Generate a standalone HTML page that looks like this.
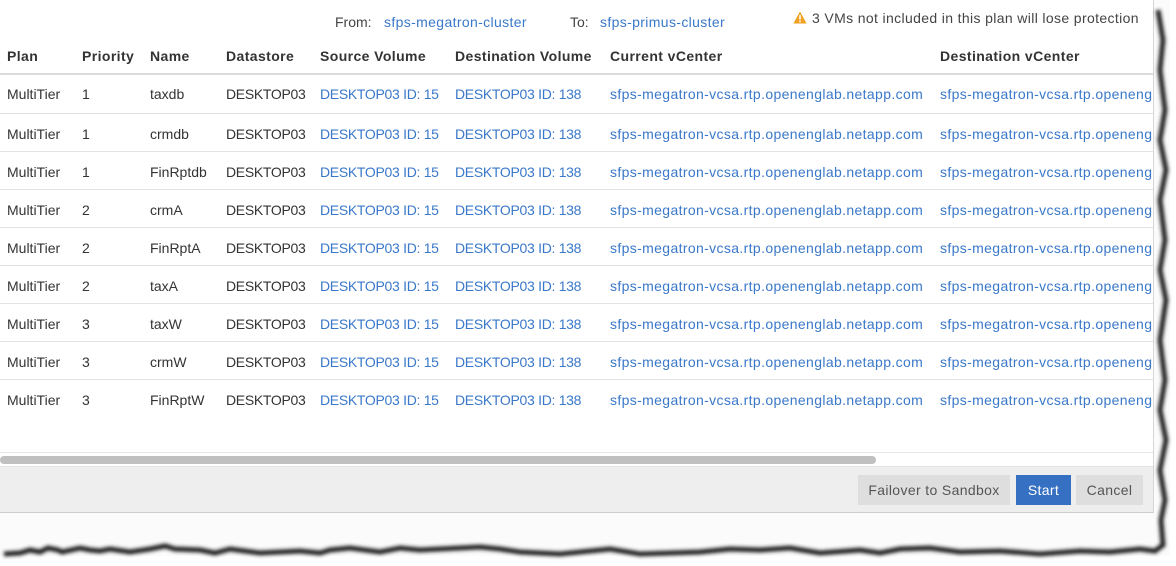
<!DOCTYPE html>
<html><head><meta charset="utf-8">
<style>
*{margin:0;padding:0;box-sizing:border-box}
body{width:1176px;height:566px;overflow:hidden;background:#fff;font-family:"Liberation Sans",sans-serif;font-size:14px;color:#333;position:relative}
#panel{position:absolute;left:0;top:0;width:1154px;height:513px;background:#fff;border-right:1px solid #d6d6d6;overflow:hidden}
.t{position:absolute;white-space:nowrap;line-height:18px}
.b{font-weight:bold;color:#333;letter-spacing:0.4px}
.l{color:#3a78c9}
.s{letter-spacing:-0.3px}
.v{letter-spacing:0.36px}
.row{position:absolute;left:0;width:1153px;height:38px;border-top:1px solid #e3e3e3}
.row .t{top:11px}
.btn{position:absolute;top:475px;height:30px;line-height:30px;text-align:center;font-size:14px;color:#555;background:#dedede}
</style></head><body>
<div style="position:absolute;left:0;top:0;width:1170px;height:556px;background:#fbfbfb"></div>
<div id="panel">
  <div class="t" style="left:335px;top:13px;color:#444">From:</div>
  <div class="t l v" style="left:384px;top:13px">sfps-megatron-cluster</div>
  <div class="t" style="left:570px;top:13px;color:#444">To:</div>
  <div class="t l v" style="left:600px;top:13px">sfps-primus-cluster</div>
  <svg style="position:absolute;left:793px;top:11px" width="14" height="13" viewBox="0 0 14 13"><path d="M7 0.5L13.6 12.5H0.4Z" fill="#f0a020"/><rect x="6.2" y="4" width="1.6" height="4.6" fill="#fff"/><rect x="6.2" y="9.6" width="1.6" height="1.6" fill="#fff"/></svg>
  <div class="t v" style="left:812px;top:9px;color:#444">3 VMs not included in this plan will lose protection</div>

  <div class="t b" style="left:7px;top:47px">Plan</div>
  <div class="t b" style="left:82px;top:47px">Priority</div>
  <div class="t b" style="left:150px;top:47px">Name</div>
  <div class="t b" style="left:226px;top:47px">Datastore</div>
  <div class="t b" style="left:320px;top:47px">Source Volume</div>
  <div class="t b" style="left:455px;top:47px">Destination Volume</div>
  <div class="t b" style="left:610px;top:47px">Current vCenter</div>
  <div class="t b" style="left:940px;top:47px">Destination vCenter</div>
  <div style="position:absolute;left:0;top:73px;width:1153px;height:2px;background:#dcdcdc"></div>

  <div class="row" style="top:74px;border-top:none"><div class="t" style="left:7px">MultiTier</div><div class="t" style="left:82px">1</div><div class="t" style="left:150px">taxdb</div><div class="t s" style="left:226px">DESKTOP03</div><div class="t l s" style="left:320px">DESKTOP03 ID: 15</div><div class="t l s" style="left:455px">DESKTOP03 ID: 138</div><div class="t l v" style="left:610px">sfps-megatron-vcsa.rtp.openenglab.netapp.com</div><div class="t l v" style="left:940px">sfps-megatron-vcsa.rtp.openenglab.netapp.com</div></div>
  <div class="row" style="top:113px"><div class="t" style="left:7px">MultiTier</div><div class="t" style="left:82px">1</div><div class="t" style="left:150px">crmdb</div><div class="t s" style="left:226px">DESKTOP03</div><div class="t l s" style="left:320px">DESKTOP03 ID: 15</div><div class="t l s" style="left:455px">DESKTOP03 ID: 138</div><div class="t l v" style="left:610px">sfps-megatron-vcsa.rtp.openenglab.netapp.com</div><div class="t l v" style="left:940px">sfps-megatron-vcsa.rtp.openenglab.netapp.com</div></div>
  <div class="row" style="top:151px"><div class="t" style="left:7px">MultiTier</div><div class="t" style="left:82px">1</div><div class="t" style="left:150px">FinRptdb</div><div class="t s" style="left:226px">DESKTOP03</div><div class="t l s" style="left:320px">DESKTOP03 ID: 15</div><div class="t l s" style="left:455px">DESKTOP03 ID: 138</div><div class="t l v" style="left:610px">sfps-megatron-vcsa.rtp.openenglab.netapp.com</div><div class="t l v" style="left:940px">sfps-megatron-vcsa.rtp.openenglab.netapp.com</div></div>
  <div class="row" style="top:189px"><div class="t" style="left:7px">MultiTier</div><div class="t" style="left:82px">2</div><div class="t" style="left:150px">crmA</div><div class="t s" style="left:226px">DESKTOP03</div><div class="t l s" style="left:320px">DESKTOP03 ID: 15</div><div class="t l s" style="left:455px">DESKTOP03 ID: 138</div><div class="t l v" style="left:610px">sfps-megatron-vcsa.rtp.openenglab.netapp.com</div><div class="t l v" style="left:940px">sfps-megatron-vcsa.rtp.openenglab.netapp.com</div></div>
  <div class="row" style="top:227px"><div class="t" style="left:7px">MultiTier</div><div class="t" style="left:82px">2</div><div class="t" style="left:150px">FinRptA</div><div class="t s" style="left:226px">DESKTOP03</div><div class="t l s" style="left:320px">DESKTOP03 ID: 15</div><div class="t l s" style="left:455px">DESKTOP03 ID: 138</div><div class="t l v" style="left:610px">sfps-megatron-vcsa.rtp.openenglab.netapp.com</div><div class="t l v" style="left:940px">sfps-megatron-vcsa.rtp.openenglab.netapp.com</div></div>
  <div class="row" style="top:265px"><div class="t" style="left:7px">MultiTier</div><div class="t" style="left:82px">2</div><div class="t" style="left:150px">taxA</div><div class="t s" style="left:226px">DESKTOP03</div><div class="t l s" style="left:320px">DESKTOP03 ID: 15</div><div class="t l s" style="left:455px">DESKTOP03 ID: 138</div><div class="t l v" style="left:610px">sfps-megatron-vcsa.rtp.openenglab.netapp.com</div><div class="t l v" style="left:940px">sfps-megatron-vcsa.rtp.openenglab.netapp.com</div></div>
  <div class="row" style="top:303px"><div class="t" style="left:7px">MultiTier</div><div class="t" style="left:82px">3</div><div class="t" style="left:150px">taxW</div><div class="t s" style="left:226px">DESKTOP03</div><div class="t l s" style="left:320px">DESKTOP03 ID: 15</div><div class="t l s" style="left:455px">DESKTOP03 ID: 138</div><div class="t l v" style="left:610px">sfps-megatron-vcsa.rtp.openenglab.netapp.com</div><div class="t l v" style="left:940px">sfps-megatron-vcsa.rtp.openenglab.netapp.com</div></div>
  <div class="row" style="top:341px"><div class="t" style="left:7px">MultiTier</div><div class="t" style="left:82px">3</div><div class="t" style="left:150px">crmW</div><div class="t s" style="left:226px">DESKTOP03</div><div class="t l s" style="left:320px">DESKTOP03 ID: 15</div><div class="t l s" style="left:455px">DESKTOP03 ID: 138</div><div class="t l v" style="left:610px">sfps-megatron-vcsa.rtp.openenglab.netapp.com</div><div class="t l v" style="left:940px">sfps-megatron-vcsa.rtp.openenglab.netapp.com</div></div>
  <div class="row" style="top:379px"><div class="t" style="left:7px">MultiTier</div><div class="t" style="left:82px">3</div><div class="t" style="left:150px">FinRptW</div><div class="t s" style="left:226px">DESKTOP03</div><div class="t l s" style="left:320px">DESKTOP03 ID: 15</div><div class="t l s" style="left:455px">DESKTOP03 ID: 138</div><div class="t l v" style="left:610px">sfps-megatron-vcsa.rtp.openenglab.netapp.com</div><div class="t l v" style="left:940px">sfps-megatron-vcsa.rtp.openenglab.netapp.com</div></div>

  <div style="position:absolute;left:0;top:452px;width:1153px;height:1px;background:#e6e6e6"></div>
  <div style="position:absolute;left:0;top:456px;width:876px;height:8px;border-radius:4px;background:#c0c0c0"></div>
  <div style="position:absolute;left:0;top:466px;width:1153px;height:47px;background:#eeeeee;border-top:1px solid #e2e2e2;border-bottom:1px solid #cccccc"></div>
  <div class="btn v" style="left:858px;width:152px">Failover to Sandbox</div>
  <div class="btn v" style="left:1016px;width:55px;background:#3670c2;color:#fff">Start</div>
  <div class="btn v" style="left:1076px;width:67px">Cancel</div>
</div>
<svg style="position:absolute;left:0;top:0" width="1176" height="566">
<defs><filter id="f" x="-5%" y="-50%" width="110%" height="200%"><feGaussianBlur stdDeviation="1.8"/></filter></defs>
<path filter="url(#f)" fill="none" stroke="#222" stroke-width="5" d="M4 554 L20 553 L30 550 L40 552 L48 548 L58 550 L62 552 L80 548 L90 550 L100 551 L110 549 L130 552 L150 549 L165 546 L175 549 L200 550 L215 553 L230 549 L260 553 L280 552 L300 551 L320 553 L330 550 L350 548 L380 552 L400 548 L420 550 L460 548 L480 547 L500 549 L520 552 L560 554 L590 551 L610 549 L640 554 L670 553 L700 552 L730 549 L760 550 L790 548 L820 553 L860 550 L880 553 L900 549 L930 548 L960 552 L1000 551 L1040 554 L1080 551 L1110 552 L1140 549 L1155 551 L1163 545 L1161 520 L1165 500 L1160 470 L1166 440 L1160 410 L1165 380 L1160 340 L1166 300 L1160 270 L1165 240 L1160 200 L1166 170 L1160 140 L1165 110 L1160 70 L1163 40 L1158 10"/>
</svg>
</body></html>
